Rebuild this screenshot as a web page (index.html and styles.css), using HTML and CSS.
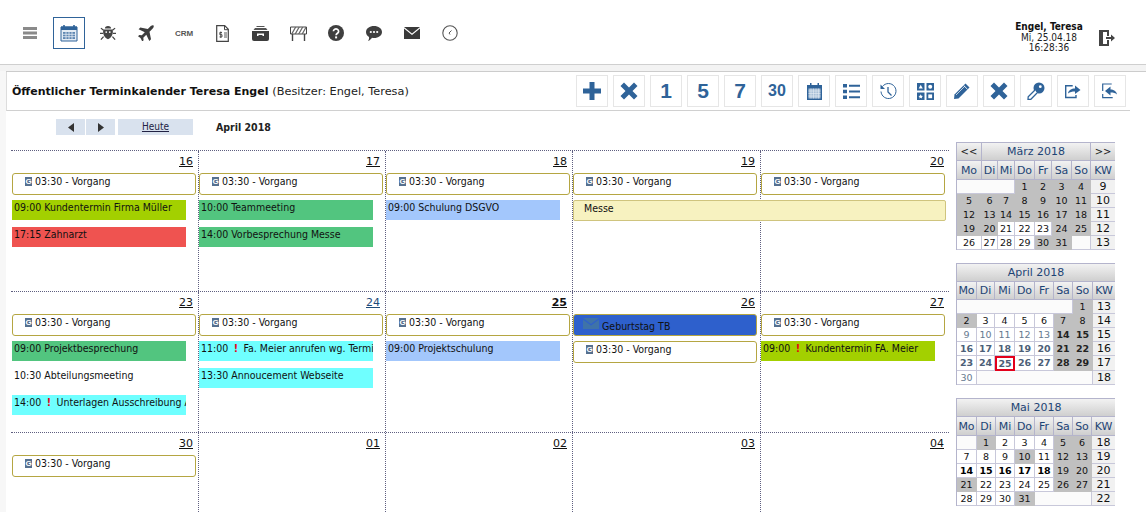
FILE: index.html
```html
<!DOCTYPE html>
<html lang="de">
<head>
<meta charset="utf-8">
<title>Terminkalender</title>
<link rel="stylesheet" href="styles.css">
</head>
<body>
<header class="topbar">
  <nav class="appnav">
    <span class="appicon"><svg width="16" height="12" viewBox="0 0 16 12"><path d="M0 0h14v3H0zM0 4.500h14v3H0zM0 9h14v3H0z" fill="#8a8a8a"/></svg></span>
    <span class="appicon appicon-active"><svg width="18" height="18" viewBox="0 0 18 18"><path d="M1 3h16v14H1z" fill="#e4ecf5" stroke="#2f6399"/><path d="M1 2.500h16V6H1z" fill="#2f6399"/><path d="M4 1v3M14 1v3" stroke="#2f6399" stroke-width="1.600"/><path d="M3 8h12v7H3z" fill="#5f87b2"/><path d="M6 8v7M9 8v7M12 8v7M3 10.300h12M3 12.700h12" stroke="#e4ecf5" stroke-width=".8"/></svg></span>
    <span class="appicon"><svg width="16" height="16" viewBox="0 0 18 18"><path d="M5.500 4a3.500 3 0 0 1 7 0zM4 5h10c1 2 1 8-5 11C3 13 3 7 4 5z" fill="#444"/><path d="M4 6 1 3.500M14 6l3-2.500M3.500 9.500H0M14.500 9.500H18M4 13l-3 3.500M14 13l3 3.500" stroke="#444" stroke-width="1.400" fill="none"/><circle cx="7" cy="8" r="1" fill="#fff"/><circle cx="11" cy="8" r="1" fill="#fff"/></svg></span>
    <span class="appicon"><svg width="16" height="16" viewBox="0 0 16 16"><path d="M15.500.5c.6.600.2 2-1 3.200l-3 3 1.500 7.500-1.700 1.700-3-6.200-3 3 .3 2.500-1.300 1.300L2.500 13 0 11.200l1.300-1.300 2.500.3 3-3L.6 4.200 2.300 2.500l7.500 1.500 3-3C14 .2 15 0 15.500.5z" fill="#3d3d3d"/></svg></span>
    <span class="appicon crm">CRM</span>
    <span class="appicon"><svg width="13" height="17" viewBox="0 0 13 17"><path d="M.7.700h8l3.600 3.600v12H.7z" fill="#fff" stroke="#444" stroke-width="1.200"/><path d="M8.500.7v4h3.800" fill="none" stroke="#444"/><path d="M6 7.500H3.800v2.200H6v2.200H3.500M4.800 6.500v6.500M8 8h3M8 10h3M8 12h3" fill="none" stroke="#444" stroke-width=".9"/></svg></span>
    <span class="appicon"><svg width="17" height="15" viewBox="0 0 17 15"><path d="M4.500 0h8v1h-8zM3 2h11l1.500 2h-14z" fill="#555"/><path d="M0 5h17v8a2 2 0 0 1-2 2H2a2 2 0 0 1-2-2z" fill="#3d3d3d"/><path d="M5 7.500h7v2.500h-1.500V9h-4v1H5z" fill="#fff"/></svg></span>
    <span class="appicon"><svg width="17" height="15" viewBox="0 0 17 15"><path d="M.5 1h16v7H.5z" fill="#fff" stroke="#444"/><path d="M1 8 5 1h1.400l-4 7zM4.500 8l4-7h1.400l-4 7zM8 8l4-7h1.400l-4 7zM11.500 8l4-7H16v1.500L12.900 8z" fill="#666"/><path d="M2.500 8v7M14.500 8v7" stroke="#444" stroke-width="1.400"/></svg></span>
    <span class="appicon"><svg width="16" height="16" viewBox="0 0 16 16"><circle cx="8" cy="8" r="8" fill="#3f3f3f"/><path d="M5.400 6.200a2.600 2.400 0 1 1 4 2.100c-1 .7-1.300 1-1.300 2" fill="none" stroke="#fff" stroke-width="1.700"/><rect x="7.100" y="11.400" width="2" height="2" fill="#fff"/></svg></span>
    <span class="appicon"><svg width="16" height="15" viewBox="0 0 16 15"><path d="M8 0c4.400 0 8 2.500 8 6s-3.600 6-8 6c-.7 0-1.300 0-2-.2C5 13 4 14.500 2 15c1-1.200 1.200-2.600 1-4C1.200 10 0 8 0 6c0-3.500 3.600-6 8-6z" fill="#3f3f3f"/><circle cx="4.800" cy="6" r="1.100" fill="#fff"/><circle cx="8" cy="6" r="1.100" fill="#fff"/><circle cx="11.200" cy="6" r="1.100" fill="#fff"/></svg></span>
    <span class="appicon"><svg width="16" height="12" viewBox="0 0 16 12"><path d="M0 0h16L8 6.500z" fill="#3a3a3a"/><path d="M0 1.600V12h16V1.600L8 8z" fill="#3a3a3a"/></svg></span>
    <span class="appicon"><svg width="16" height="16" viewBox="0 0 16 16"><circle cx="8" cy="8" r="7.200" fill="#fff" stroke="#555" stroke-width="1.100"/><path d="M9.500 5.500 7 8l1 1.500" fill="none" stroke="#555"/></svg></span>
  </nav>
  <div class="userblock">
    <div class="usertext">
      <strong class="username">Engel, Teresa</strong>
      <span>Mi, 25.04.18</span>
      <span>16:28:36</span>
    </div>
    <svg class="logout" width="16" height="16" viewBox="0 0 16 16"><path d="M0 0h10v6H8V2H3v12h5v-4h2v6H0z" fill="#444"/><path d="M0 0l4 1.500v13L0 16z" fill="#444"/><path d="M7 7h5V4.500L16 8l-4 3.500V9H7z" fill="#444"/></svg>
  </div>
</header>
<div class="band"></div>
<div class="stage">
  <section class="headrow">
    <h1 class="title">Öffentlicher Terminkalender Teresa Engel <span class="owner">(Besitzer: Engel, Teresa)</span></h1>
    <div class="tools">
      <span class="tool"><svg width="20" height="20" viewBox="0 0 20 20"><path d="M7.500 1h5v6.500H19v5h-6.500V19h-5v-6.500H1v-5h6.500z" fill="#2f6399"/></svg></span>
      <span class="tool"><svg width="18" height="18" viewBox="0 0 18 18"><path d="M4 .5 9 5.500l5-5L17.500 4l-5 5 5 5-3.500 3.500-5-5-5 5L.5 14l5-5-5-5z" fill="#2f6399"/></svg></span>
      <span class="tool tool-num">1</span>
      <span class="tool tool-num">5</span>
      <span class="tool tool-num">7</span>
      <span class="tool tool-small">30</span>
      <span class="tool"><svg width="15" height="17" viewBox="0 0 15 17"><path d="M0 2h15v15H0z" fill="#2f6399"/><path d="M3 0h1.500v3H3zM10.500 0H12v3h-1.500z" fill="#2f6399"/><path d="M1.500 5.500h12V15.500h-12z" fill="#a9c0d8"/><path d="M4 5.500v10M6.500 5.500v10M9 5.500v10M11.500 5.500v10M1.500 8h12M1.500 10.500h12M1.500 13h12" stroke="#e6edf4" stroke-width=".6"/></svg></span>
      <span class="tool"><svg width="17" height="15" viewBox="0 0 17 15"><path d="M0 0h4v3.500H0zM0 5.700h4v3.500H0zM0 11.500h4V15H0zM6 .7h11v2H6zM6 6.500h11v2H6zM6 12.200h11v2H6z" fill="#2f6399"/></svg></span>
      <span class="tool"><svg width="17" height="17" viewBox="0 0 17 17"><path d="M2.500 3.500A7.500 7.500 0 1 1 1 8.500" fill="none" stroke="#2f6399" stroke-width="1"/><path d="M.5 1.500v4.500h4.500z" fill="#2f6399"/><path d="M8 4v5l3.500 3.500" fill="none" stroke="#2f6399" stroke-width="1.300"/></svg></span>
      <span class="tool"><svg width="17" height="17" viewBox="0 0 17 17"><path d="M0 0h7.500v7.500H0zM9.500 0H17v7.500H9.500zM0 9.500h7.500V17H0zM9.500 9.500H17V17H9.500z" fill="#2f6399"/><path d="M3.700 1.800 5.800 5.500H1.700z" fill="#fff"/><circle cx="13.200" cy="3.700" r="2" fill="#fff"/><path d="M3.700 11.200l.7 1.500 1.600.2-1.200 1.100.3 1.600-1.400-.8-1.400.8.300-1.600L1.400 12.900 3 12.700z" fill="#fff"/><path d="M11.300 11.400h3.800v3.800h-3.800z" fill="#fff"/></svg></span>
      <span class="tool"><svg width="18" height="18" viewBox="0 0 18 18"><path d="M12.500 1.500 16.500 5.500 5.500 16.500 1 17l.5-4.500z" fill="#2f6399"/><path d="M10.700 3.500l3.800 3.800" stroke="#fff" stroke-width=".9"/><path d="M3 13 12 4" stroke="#fff" stroke-width=".7"/></svg></span>
      <span class="tool"><svg width="18" height="18" viewBox="0 0 18 18"><path d="M4 .5 9 5.500l5-5L17.500 4l-5 5 5 5-3.500 3.500-5-5-5 5L.5 14l5-5-5-5z" fill="#2f6399"/></svg></span>
      <span class="tool"><svg width="18" height="18" viewBox="0 0 18 18"><circle cx="12" cy="6" r="5.500" fill="#2f6399"/><path d="M8 8 1.200 14.800 1 17.500h2.700L10 11" fill="#fff" stroke="#2f6399" stroke-width="1.300"/><circle cx="13.300" cy="4.700" r="1.400" fill="#fff"/></svg></span>
      <span class="tool"><svg width="16" height="16" viewBox="0 0 16 16"><path d="M11 12v2.500H.7V2.700h7" fill="none" stroke="#2f6399" stroke-width="1.400"/><path d="M3 10.500c.5-3.500 3.500-5 7-5V2.500l5.500 4.500L10 11V8.500c-3 0-5 .5-7 2z" fill="#2f6399"/></svg></span>
      <span class="tool"><svg width="16" height="16" viewBox="0 0 16 16"><path d="M.7 8V1h9M.7 11v3.700h10" fill="none" stroke="#2f6399" stroke-width="1.200"/><path d="M15 11.500c-.5-3.500-3.500-5-6.500-5V3.500L3 8l5.500 4.500V9.500c3 0 5 .5 6.500 2z" fill="#2f6399"/></svg></span>
    </div>
  </section>
  <section class="navrow">
    <span class="navbtn"><svg width="6" height="9" viewBox="0 0 6 9"><path d="M6 0v9L0 4.500z" fill="#333"/></svg></span>
    <span class="navbtn navbtn-next"><svg width="6" height="9" viewBox="0 0 6 9"><path d="M0 0v9l6-4.500z" fill="#333"/></svg></span>
    <a class="today" href="#">Heute</a>
    <strong class="month">April 2018</strong>
  </section>
  <main class="content">
    <div class="calendar">
      <div class="week">
        <div class="day">
          <a class="num" href="#">16</a>
          <div class="chip"><span class="gicon">G</span>03:30 - Vorgang</div>
          <div class="event ev-lime">09:00 Kundentermin Firma Müller</div>
          <div class="event ev-red">17:15 Zahnarzt</div>
        </div>
        <div class="day">
          <a class="num" href="#">17</a>
          <div class="chip"><span class="gicon">G</span>03:30 - Vorgang</div>
          <div class="event ev-green">10:00 Teammeeting</div>
          <div class="event ev-green">14:00 Vorbesprechung Messe</div>
        </div>
        <div class="day">
          <a class="num" href="#">18</a>
          <div class="chip"><span class="gicon">G</span>03:30 - Vorgang</div>
          <div class="event ev-blue">09:00 Schulung DSGVO</div>
        </div>
        <div class="day">
          <a class="num" href="#">19</a>
          <div class="chip"><span class="gicon">G</span>03:30 - Vorgang</div>
          <div class="span-event">Messe</div>
        </div>
        <div class="day">
          <a class="num" href="#">20</a>
          <div class="chip"><span class="gicon">G</span>03:30 - Vorgang</div>
        </div>
      </div>
      <div class="week">
        <div class="day">
          <a class="num" href="#">23</a>
          <div class="chip"><span class="gicon">G</span>03:30 - Vorgang</div>
          <div class="event ev-green">09:00 Projektbesprechung</div>
          <div class="event">10:30 Abteilungsmeeting</div>
          <div class="event ev-cyan">14:00 <span class="alert">!</span> Unterlagen Ausschreibung Ausgabe</div>
        </div>
        <div class="day">
          <a class="num num-link" href="#">24</a>
          <div class="chip"><span class="gicon">G</span>03:30 - Vorgang</div>
          <div class="event ev-cyan">11:00 <span class="alert">!</span> Fa. Meier anrufen wg. Termin</div>
          <div class="event ev-cyan">13:30 Annoucement Webseite</div>
        </div>
        <div class="day">
          <a class="num num-today" href="#">25</a>
          <div class="chip"><span class="gicon">G</span>03:30 - Vorgang</div>
          <div class="event ev-blue">09:00 Projektschulung</div>
        </div>
        <div class="day">
          <a class="num" href="#">26</a>
          <div class="chip chip-birthday"><svg class="bicon" width="16" height="11" viewBox="0 0 16 11"><path d="M0 0h16L8 6z" fill="#3f73a8"/><path d="M0 1.500V11h16V1.500L8 7.500z" fill="#3f73a8"/></svg>Geburtstag TB</div>
          <div class="chip"><span class="gicon">G</span>03:30 - Vorgang</div>
        </div>
        <div class="day">
          <a class="num" href="#">27</a>
          <div class="chip"><span class="gicon">G</span>03:30 - Vorgang</div>
          <div class="event ev-lime">09:00 <span class="alert">!</span> Kundentermin FA. Meier</div>
        </div>
      </div>
      <div class="week week-last">
        <div class="day">
          <a class="num" href="#">30</a>
          <div class="chip"><span class="gicon">G</span>03:30 - Vorgang</div>
        </div>
        <div class="day"><a class="num" href="#">01</a></div>
        <div class="day"><a class="num" href="#">02</a></div>
        <div class="day"><a class="num" href="#">03</a></div>
        <div class="day"><a class="num" href="#">04</a></div>
      </div>
    </div>
    <aside class="minis">
      <table class="mini mini-mar">
        <colgroup><col class="c25"><col class="c16"><col class="c17"><col class="c20"><col class="c17"><col class="c20"><col class="c19"><col class="c24"></colgroup>
        <tr class="titlerow"><th class="arrow">&lt;&lt;</th><th colspan="6">März 2018</th><th class="arrow">&gt;&gt;</th></tr>
        <tr class="dowrow"><th>Mo</th><th>Di</th><th>Mi</th><th>Do</th><th>Fr</th><th>Sa</th><th>So</th><th>KW</th></tr>
        <tr><td colspan="3" class="blank"></td><td class="g">1</td><td class="g">2</td><td class="g">3</td><td class="g">4</td><td class="kw">9</td></tr>
        <tr><td class="g">5</td><td class="g">6</td><td class="g">7</td><td class="g">8</td><td class="g">9</td><td class="g">10</td><td class="g">11</td><td class="kw">10</td></tr>
        <tr><td class="g">12</td><td class="g">13</td><td class="g">14</td><td class="g">15</td><td class="g">16</td><td class="g">17</td><td class="g">18</td><td class="kw">11</td></tr>
        <tr><td class="g">19</td><td class="g">20</td><td>21</td><td>22</td><td>23</td><td class="g">24</td><td class="g">25</td><td class="kw">12</td></tr>
        <tr><td>26</td><td>27</td><td>28</td><td>29</td><td class="g">30</td><td class="g">31</td><td class="blank"></td><td class="kw">13</td></tr>
      </table>
      <table class="mini mini-apr">
        <colgroup><col class="c20"><col class="c18"><col class="c20"><col class="c20"><col class="c19"><col class="c19"><col class="c20"><col class="c22"></colgroup>
        <tr class="titlerow"><th colspan="8">April 2018</th></tr>
        <tr class="dowrow"><th>Mo</th><th>Di</th><th>Mi</th><th>Do</th><th>Fr</th><th>Sa</th><th>So</th><th>KW</th></tr>
        <tr><td colspan="6" class="blank"></td><td class="g">1</td><td class="kw">13</td></tr>
        <tr><td class="g">2</td><td>3</td><td>4</td><td>5</td><td>6</td><td class="g">7</td><td class="g">8</td><td class="kw">14</td></tr>
        <tr><td class="l">9</td><td class="l">10</td><td class="l">11</td><td class="l">12</td><td class="l">13</td><td class="g b">14</td><td class="g b">15</td><td class="kw">15</td></tr>
        <tr><td class="s">16</td><td class="s">17</td><td class="s">18</td><td class="s">19</td><td class="s">20</td><td class="g b">21</td><td class="g b">22</td><td class="kw">16</td></tr>
        <tr><td class="s">23</td><td class="s">24</td><td class="s now">25</td><td class="s">26</td><td class="s">27</td><td class="g b">28</td><td class="g b">29</td><td class="kw">17</td></tr>
        <tr><td class="l">30</td><td colspan="6" class="blank"></td><td class="kw">18</td></tr>
      </table>
      <table class="mini mini-mai">
        <colgroup><col class="c20"><col class="c19"><col class="c19"><col class="c20"><col class="c19"><col class="c19"><col class="c19"><col class="c23"></colgroup>
        <tr class="titlerow"><th colspan="8">Mai 2018</th></tr>
        <tr class="dowrow"><th>Mo</th><th>Di</th><th>Mi</th><th>Do</th><th>Fr</th><th>Sa</th><th>So</th><th>KW</th></tr>
        <tr><td class="blank"></td><td class="g">1</td><td>2</td><td>3</td><td>4</td><td class="g">5</td><td class="g">6</td><td class="kw">18</td></tr>
        <tr><td>7</td><td>8</td><td>9</td><td class="g">10</td><td>11</td><td class="g">12</td><td class="g">13</td><td class="kw">19</td></tr>
        <tr><td class="k">14</td><td class="k">15</td><td class="k">16</td><td class="k">17</td><td class="k">18</td><td class="g">19</td><td class="g">20</td><td class="kw">20</td></tr>
        <tr><td class="g">21</td><td>22</td><td>23</td><td>24</td><td>25</td><td class="g">26</td><td class="g">27</td><td class="kw">21</td></tr>
        <tr><td>28</td><td>29</td><td>30</td><td class="g">31</td><td colspan="3" class="blank"></td><td class="kw">22</td></tr>
      </table>
    </aside>
  </main>
</div>
</body>
</html>
```
FILE: styles.css
```css
* { box-sizing: border-box; }
html, body { margin: 0; height: 512px; overflow: hidden; }
body {
  background: #f7f7f7;
  color: #111;
  font-family: "DejaVu Sans", Verdana, sans-serif;
  font-size: 10px;
}
.topbar {
  display: flex;
  align-items: flex-start;
  justify-content: space-between;
  height: 65px;
  background: #fff;
  border-bottom: 1px solid #cfcfcf;
  padding: 17px 31px 0 15px;
}
.appnav { display: flex; gap: 6px; }
.appicon {
  width: 32px;
  height: 32px;
  display: flex;
  align-items: center;
  justify-content: center;
}
.appicon-active { border: 1px solid #2f6399; margin-right: 1px; }
.crm {
  font-family: "Liberation Sans", Arial, sans-serif;
  font-size: 8px;
  font-weight: bold;
  color: #555;
}
.userblock { display: flex; align-items: flex-start; gap: 6px; padding-top: 5px; }
.usertext {
  width: 88px;
  display: flex;
  flex-direction: column;
  align-items: center;
  font-size: 10px;
  font-stretch: condensed;
  line-height: 10.500px;
  color: #222;
}
.username { color: #111; }
.logout { margin-top: 8px; }
.band { height: 6px; background: #f3f3f3; }
.stage {
  margin-left: 6px;
  background: #fff;
  height: 441px;
  border-top: 1px solid #ccc;
}
.headrow {
  width: 1124px;
  height: 39px;
  display: flex;
  align-items: flex-start;
  justify-content: space-between;
  border-bottom: 1px solid #d0d0d0;
  border-left: 1px solid #ddd;
  padding: 3px 4px 0 5px;
}
.title {
  margin: 0;
  padding-top: 9px;
  font-size: 11px;
  line-height: 15px;
  font-weight: bold;
  color: #111;
  white-space: nowrap;
}
.owner { font-weight: normal; font-size: 11.300px; color: #222; }
.tools { display: flex; gap: 5px; }
.tool {
  width: 32px;
  height: 32px;
  display: flex;
  align-items: center;
  justify-content: center;
  border: 1px solid #e6e6e6;
  background: #fff;
  color: #2f6399;
  font-family: "Liberation Sans", Arial, sans-serif;
  font-weight: bold;
}
.tool-num { font-size: 21px; }
.tool-small { font-size: 16px; }
.navrow {
  display: flex;
  align-items: center;
  height: 16px;
  margin-top: 8px;
  padding-left: 50px;
}
.navbtn {
  width: 29px;
  height: 16px;
  display: flex;
  align-items: center;
  justify-content: center;
  background: #d9e2ee;
}
.navbtn-next { margin-left: 1px; margin-right: 3px; }
.today {
  width: 75px;
  height: 16px;
  line-height: 15px;
  text-align: center;
  background: #d9e2ee;
  color: #224;
  font-size: 10px;
  font-stretch: condensed;
}
.month { margin-left: 23px; font-size: 10.500px; font-stretch: condensed; color: #222; }
.content { display: flex; align-items: flex-start; padding: 7px 0 0 5px; }
.calendar { width: 938px; padding-top: 8px; }
.week {
  display: grid;
  grid-template-columns: 188px 187px 187px 188px 188px;
  height: 141px;
  border-top: 1px dotted #5f5f80;
}
.week-last { height: 80px; }
.day {
  position: relative;
  border-right: 1px dotted #5f5f80;
  font-stretch: condensed;
  font-size: 10.500px;
  min-width: 0;
}
.day:first-child { padding-left: 1px; }
.day:last-child { border-right: none; }
.num {
  display: block;
  height: 22px;
  padding: 3px 5px 0 0;
  text-align: right;
  color: #111;
  font-size: 11px;
  line-height: 15px;
  font-stretch: normal;
  text-decoration: underline;
}
.num-link { color: #1d4b7a; }
.num-today { font-weight: bold; }
.chip {
  width: 184px;
  height: 22px;
  margin-bottom: 5px;
  padding-left: 12px;
  display: flex;
  align-items: flex-start;
  border: 1px solid #b5a642;
  border-radius: 3px;
  background: #fff;
  line-height: 14px;
  color: #111;
  white-space: nowrap;
}
.gicon {
  width: 7px;
  height: 9px;
  margin: 3px 3px 0 0;
  background: #56708f;
  color: #fff;
  font-family: "Liberation Sans", Arial, sans-serif;
  font-size: 8px;
  font-weight: bold;
  line-height: 9px;
  text-align: center;
  flex: none;
}
.chip-birthday {
  background: #2e60cc;
  padding-left: 9px;
  line-height: 23px;
  color: #111;
}
.bicon { flex: none; margin: 3px 3px 0 0; }
.event {
  width: 174px;
  height: 20px;
  margin-bottom: 7px;
  padding-left: 2px;
  line-height: 14px;
  overflow: hidden;
  white-space: nowrap;
  color: #111;
}
.ev-lime { background: #a3d000; }
.ev-red { background: #ef5350; }
.ev-green { background: #52c57f; }
.ev-blue { background: #a3c7fc; }
.ev-cyan { background: #6fffff; }
.alert { color: #e60012; font-weight: bold; margin: 0 2.500px; }
.span-event {
  position: absolute;
  left: 0;
  top: 49px;
  width: 373px;
  height: 21px;
  padding-left: 10px;
  line-height: 15px;
  background: #f7f2c0;
  border: 1px solid #cfc47e;
  border-radius: 2px;
  z-index: 1;
}
.minis {
  display: flex;
  flex-direction: column;
  gap: 13px;
  margin-left: 7px;
}
.mini {
  width: 158px;
  table-layout: fixed;
  border-collapse: separate;
  border-spacing: 0;
  border-top: 1px solid #b4b4cc;
  border-left: 1px solid #b4b4cc;
  background: #fff;
}
.mini th {
  padding: 0;
  height: 18px;
  font-weight: normal;
  font-size: 11px;
  color: #1d4475;
  background: linear-gradient(#f2f2f2, #cfcfcf);
  border-right: 1px solid #b4b4cc;
  border-bottom: 1px solid #b4b4cc;
  overflow: hidden;
}
.mini-mar .dowrow th, .mini-mai .dowrow th { height: 19px; }
.mini th:last-child { border-right: none; }
.mini .arrow { font-size: 10px; color: #222; }
.mini td {
  padding: 0;
  height: 14px;
  font-size: 9.500px;
  line-height: 12px;
  text-align: center;
  color: #111;
  background: #fff;
  border-right: 1px solid #c8c8da;
  border-bottom: 1px solid #c8c8da;
}
.mini td.g { background: #c0c0c0; border-color: #c0c0c0; color: #111; }
.mini td.blank { background: #fbfbfb; }
.mini td.kw {
  background: #f1f1f1;
  border-right: none;
  font-size: 11px;
  color: #111;
}
.mini td.l { color: #667a8f; }
.mini td.s { color: #4d5f78; font-weight: bold; }
.mini td.b { font-weight: bold; color: #222; }
.mini td.k { font-weight: bold; color: #000; }
.mini td.now { border: 2px solid #e3001b; line-height: 11px; }
.c16 { width: 16px; }
.c17 { width: 17px; }
.c18 { width: 18px; }
.c19 { width: 19px; }
.c20 { width: 20px; }
.c22 { width: 22px; }
.c23 { width: 23px; }
.c24 { width: 24px; }
.c25 { width: 25px; }
```
